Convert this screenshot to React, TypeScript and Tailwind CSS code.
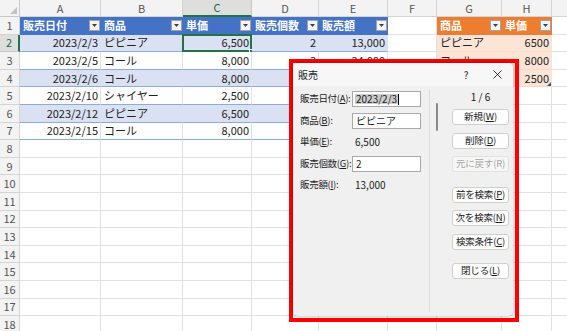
import React from "react";

const cols = [
  { k: "A", w: "w-[81px]" },
  { k: "B", w: "w-[82px]" },
  { k: "C", w: "w-[69px]" },
  { k: "D", w: "w-[67px]" },
  { k: "E", w: "w-[69px]" },
  { k: "F", w: "w-[49px]" },
  { k: "G", w: "w-[65px]" },
  { k: "H", w: "w-[50px]" },
  { k: "", w: "w-[64px]" },
];

const head1 = ["販売日付", "商品", "単価", "販売個数", "販売額"];
// D・E列の4行目以降はフォームの下に隠れている
const sales = [
  ["2023/2/3", "ピピニア", "6,500", "2", "13,000"],
  ["2023/2/5", "コール", "8,000", "3", "24,000"],
  ["2023/2/6", "コール", "8,000", "", ""],
  ["2023/2/10", "シャイヤー", "2,500", "", ""],
  ["2023/2/12", "ピピニア", "6,500", "", ""],
  ["2023/2/15", "コール", "8,000", "", ""],
];
const head2 = ["商品", "単価"];
const prices = [
  ["ピピニア", "6500"],
  ["コール", "8000"],
  ["", "2500"],
];

const rows = Array.from({ length: 18 }, (_, i) => i + 1);

function Drop() {
  return (
    <span className="ml-auto mr-[1px] flex h-[11px] w-[11px] shrink-0 items-center justify-center border border-[#a3a3a3] bg-[#f3f3f3]">
      <svg width="5" height="3" viewBox="0 0 5 3">
        <path d="M0 0h5L2.5 3z" fill="#404040" />
      </svg>
    </span>
  );
}

function Cell({ r, c }: { r: number; c: number }) {
  const w = cols[c].w;
  const right = c === 0 || c === 2 || c === 3 || c === 4 || c === 7;

  // 販売テーブル A1:E7
  if (c <= 4 && r <= 7) {
    if (r === 1) {
      return (
        <div className={`${w} flex h-full items-center bg-[#4472c4] pl-[3px] font-bold text-white`}>
          <span>{head1[c]}</span>
          <Drop />
        </div>
      );
    }
    const band = r % 2 === 0;
    const sel = r === 2 && c === 2;
    return (
      <div
        className={`${w} relative flex h-full items-center border-b border-r border-b-[#8ea9db] ${
          band ? "border-r-[#d9e1f2] bg-[#d9e1f2]" : "border-r-[#e1e1e1] bg-white"
        } ${right ? "justify-end pr-[2px]" : "pl-[3px]"}`}
      >
        {sales[r - 2][c]}
        {sel && (
          <>
            <span className="absolute -left-[1px] -top-[1px] bottom-[-1px] right-[-1px] border-2 border-[#217346]" />
            <span className="absolute -bottom-[3px] -right-[3px] h-[5px] w-[5px] border border-white bg-[#217346]" />
          </>
        )}
      </div>
    );
  }

  // 単価テーブル G1:H4
  if ((c === 6 || c === 7) && r <= 4) {
    if (r === 1) {
      return (
        <div className={`${w} flex h-full items-center bg-[#ed7d31] pl-[3px] font-bold text-white`}>
          <span>{head2[c - 6]}</span>
          <Drop />
        </div>
      );
    }
    return (
      <div
        className={`${w} relative flex h-full items-center border-b border-r border-b-[#fbd9c4] border-r-[#fce4d6] bg-[#fce4d6] ${
          right ? "justify-end pr-[2px]" : "pl-[3px]"
        }`}
      >
        {prices[r - 2][c - 6]}
        {r === 4 && c === 7 && (
          <svg className="absolute bottom-0 right-0" width="4" height="4" viewBox="0 0 4 4">
            <path d="M4 0v4H0z" fill="#2f5597" />
          </svg>
        )}
      </div>
    );
  }

  return <div className={`${w} h-full border-b border-r border-[#e1e1e1] bg-white`} />;
}

function Btn({ children, off }: { children: React.ReactNode; off?: boolean }) {
  return (
    <div
      className={`flex h-[16px] w-[57px] items-center justify-center whitespace-nowrap rounded-[3px] border tracking-[-0.2px] ${
        off ? "border-[#e2e2e2] bg-[#f6f6f6] text-[#a6a6a6]" : "border-[#cfcfcf] bg-[#fdfdfd] text-[#1b1b1b]"
      }`}
    >
      {children}
    </div>
  );
}

function Field({ label, children }: { label: React.ReactNode; children: React.ReactNode }) {
  return (
    <div className="flex h-[16px] items-center">
      <span className="w-[52px] shrink-0 whitespace-nowrap tracking-[-0.3px]">{label}</span>
      {children}
    </div>
  );
}

export default function App() {
  return (
    <div className="relative h-[331px] w-[567px] overflow-hidden bg-white font-['Noto_Sans_CJK_JP',sans-serif] text-[11px] leading-none text-[#222]">
      {/* 列見出し */}
      <div className="flex h-[17px]">
        <div className="relative w-[20px] shrink-0 border-b border-r border-[#c8c8c8] bg-[#f3f3f3]">
          <svg className="absolute bottom-[2px] right-[2px]" width="7" height="7" viewBox="0 0 7 7">
            <path d="M7 0v7H0z" fill="#c2c2c2" />
          </svg>
        </div>
        {cols.map((col, i) => (
          <div
            key={i}
            className={`${col.w} flex h-full shrink-0 items-center justify-center border-r ${
              i === 2
                ? "border-b-2 border-b-[#217346] border-r-[#c8c8c8] bg-[#dedede] text-[#1e6b3f]"
                : "border-b border-[#d4d4d4] bg-[#f3f3f3] text-[#555]"
            }`}
          >
            {col.k}
          </div>
        ))}
      </div>

      {rows.map((r) => (
        <div key={r} className="flex h-[17.6px]">
          <div
            className={`flex w-[20px] shrink-0 items-center justify-center border-b ${
              r === 2
                ? "border-r-2 border-b-[#c8c8c8] border-r-[#217346] bg-[#dedede] text-[#1e6b3f]"
                : "border-r border-[#d4d4d4] bg-[#f3f3f3] text-[#555]"
            }`}
          >
            {r}
          </div>
          {cols.map((col, c) => (
            <div key={c} className="h-full shrink-0">
              <Cell r={r} c={c} />
            </div>
          ))}
        </div>
      ))}

      {/* データフォーム */}
      <div className="absolute left-[289px] top-[59px] h-[263px] w-[230px] border-4 border-[#ff0000] pb-[2px] pr-[2px] text-[9.5px] text-[#1b1b1b]">
        <div className="flex h-full flex-col rounded-[5px] bg-[#f0f0f0] shadow-[0_0_4px_rgba(0,0,0,0.35)]">
          <div className="flex h-[23px] shrink-0 items-center rounded-t-[5px] bg-[#f7f7f7] pl-[5px] text-[10px]">
            <span>販売</span>
            <span className="ml-auto w-[30px] text-center">?</span>
            <span className="flex w-[32px] items-center justify-center">
              <svg width="9" height="9" viewBox="0 0 9 9">
                <path d="M0.5 0.5l8 8M8.5 0.5l-8 8" stroke="#333" strokeWidth="1" />
              </svg>
            </span>
          </div>

          <div className="flex flex-1">
            <div className="flex w-[136px] shrink-0 flex-col gap-[5.5px] pl-[7px] pt-[5px]">
              <Field label={<>販売日付(<u>A</u>):</>}>
                <div className="flex h-[16px] w-[69px] items-center border border-[#a9a9a9] bg-white pl-[2px] text-[10px]">
                  <span className="bg-[#cdcdcd] px-[1px]">2023/2/3</span>
                  <span className="h-[11px] w-px bg-black" />
                </div>
              </Field>
              <Field label={<>商品(<u>B</u>):</>}>
                <div className="flex h-[16px] w-[69px] items-center border border-[#a9a9a9] bg-white pl-[3px] text-[10px]">ピピニア</div>
              </Field>
              <Field label={<>単価(<u>E</u>):</>}>
                <span className="pl-[3px] text-[10px]">6,500</span>
              </Field>
              <Field label={<>販売個数(<u>G</u>):</>}>
                <div className="flex h-[16px] w-[69px] items-center border border-[#a9a9a9] bg-white pl-[3px] text-[10px]">2</div>
              </Field>
              <Field label={<>販売額(<u>I</u>):</>}>
                <span className="pl-[3px] text-[10px]">13,000</span>
              </Field>
            </div>

            <div className="mb-[4px] mt-[4px] w-px shrink-0 bg-[#dadada]" />
            <div className="w-[22px] shrink-0 pl-[6px] pt-[17px]">
              <div className="h-[28px] w-[2px] rounded-full bg-[#8a8a8a]" />
            </div>

            <div className="flex w-[57px] shrink-0 flex-col">
              <div className="mt-[4px] flex h-[14px] items-center justify-center text-[10px]">1 / 6</div>
              <div className="mt-[5px]">
                <Btn>新規(<u>W</u>)</Btn>
              </div>
              <div className="mt-[8px]">
                <Btn>削除(<u>D</u>)</Btn>
              </div>
              <div className="mt-[7px]">
                <Btn off>元に戻す(R)</Btn>
              </div>
              <div className="mt-[15px]">
                <Btn>前を検索(<u>P</u>)</Btn>
              </div>
              <div className="mt-[7px]">
                <Btn>次を検索(<u>N</u>)</Btn>
              </div>
              <div className="mt-[8px]">
                <Btn>検索条件(<u>C</u>)</Btn>
              </div>
              <div className="mt-[13px]">
                <Btn>閉じる(<u>L</u>)</Btn>
              </div>
            </div>
          </div>
        </div>
      </div>
    </div>
  );
}
